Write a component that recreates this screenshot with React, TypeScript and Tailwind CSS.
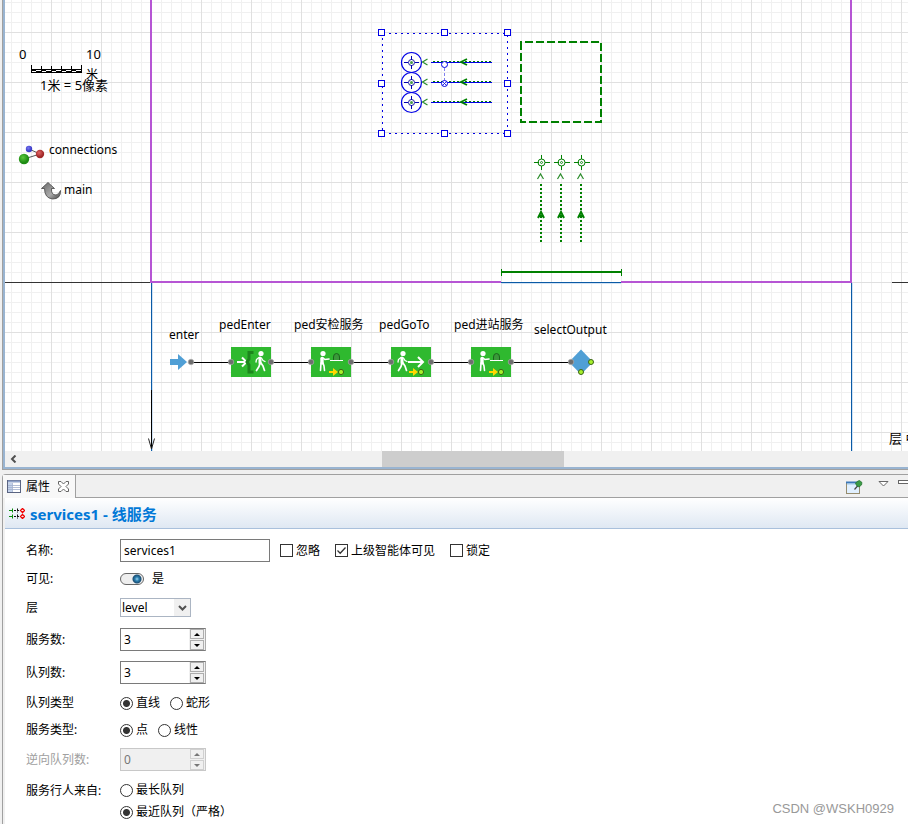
import { useState, type ReactNode } from "react";

const GREEN = "#008000";
const BLUE = "#0000e6";

function Walker({ x, y }: { x: number; y: number }) {
  return (
    <g transform={`translate(${x} ${y})`} stroke="#fff" fill="none" strokeLinecap="round" strokeLinejoin="round">
      <circle cx="6" cy="2.5" r="2.6" fill="#fff" stroke="none" />
      <path d="M5 7 L5 12" strokeWidth="3" />
      <path d="M4 6.5 L1.5 8.5 L1 11 M6.5 7 L8 9.5 L10 10.5" strokeWidth="1.300" />
      <path d="M5 12 L4 15.5 L1.5 19.5 M6 12 L8 15 L9.5 19.5" strokeWidth="1.700" />
    </g>
  );
}

function Server({ x, y }: { x: number; y: number }) {
  return (
    <g transform={`translate(${x} ${y})`}>
      <g stroke="#fff" fill="none" strokeLinecap="round">
        <circle cx="5" cy="2.5" r="2.6" fill="#fff" stroke="none" />
        <path d="M4 7.5 L4 12" strokeWidth="3.400" />
        <path d="M4.5 6.5 L7 8.5 L11 8" strokeWidth="1.600" />
        <path d="M3 12 L2.5 19.5 M5 12 L6 15 L6.5 19.5" strokeWidth="1.600" />
      </g>
      <path d="M15.500 9 V6 Q15.500 2.500 18.5 2.500 Q21.500 2.500 21.500 6 V9" fill="#3a9a3a" stroke="#1c641c" strokeWidth="1" />
      <path d="M12 9.500H25" stroke="#fff" />
    </g>
  );
}

function YellowExit({ x }: { x: number }) {
  return (
    <g>
      <path d={`M${x} 371 h4 v-3 l5 4 l-5 4 v-3 h-4z`} fill="#ffd800" />
      <circle cx={x + 12} cy="372" r="2.6" fill="#a6f02c" stroke="#3c6414" />
    </g>
  );
}

function Block({ x, kind }: { x: number; kind: "enter" | "service" | "goto" }) {
  return (
    <g>
      <rect x={x} y="347" width="40" height="30" fill="#2fb92f" />
      {kind === "enter" && (
        <>
          <path d="M237 362 H246 M242 357.5 L246.5 362 L242 366.5" stroke="#fff" strokeWidth="2" fill="none" />
          <path d="M253.500 352.500 H249 V359 L247 362 L249 365 V372 H253.500" stroke="#1d861d" strokeWidth="3" fill="none" />
          <Walker x={255} y={351} />
        </>
      )}
      {kind === "service" && (
        <>
          <Server x={x + 7} y={351} />
          <YellowExit x={x + 18} />
        </>
      )}
      {kind === "goto" && (
        <>
          <Walker x={x + 6} y={351} />
          <path d={`M${x + 17} 362 H${x + 31} M${x + 27} 357 L${x + 32} 362 L${x + 27} 367`} stroke="#fff" strokeWidth="2" fill="none" />
          <YellowExit x={x + 18} />
        </>
      )}
    </g>
  );
}

function Selection() {
  return (
    <g fill="none">
      <rect x="382.500" y="33.500" width="125" height="100" stroke={BLUE} strokeDasharray="2 4" shapeRendering="crispEdges" />
      {[62, 82, 102].map((y) => (
        <g key={y}>
          <circle cx="411.500" cy={y + 0.5} r="10" stroke={BLUE} strokeWidth="1.200" />
          <circle cx="411.500" cy={y + 0.5} r="3" stroke="#1a1aa0" fill="#fff" />
          <circle cx="411.500" cy={y + 0.5} r="1.500" fill="#4a9a4a" />
          <path d={`M411.500 ${y - 6}v4 M411.500 ${y + 3}v4 M404 ${y + 0.5}h4 M415 ${y + 0.5}h4`} stroke="#0000b0" />
          <path d={`M427.500 ${y - 3} L422.500 ${y} L427.500 ${y + 3}`} stroke="#2a8c2a" strokeWidth="1.200" />
          <path d={`M433 ${y - 0.5}H492`} stroke={GREEN} strokeDasharray="2 2" shapeRendering="crispEdges" />
          <path d={`M431 ${y + 0.5}H492`} stroke={BLUE} shapeRendering="crispEdges" />
          <path d={`M467 ${y - 3} L461 ${y} L467 ${y + 3}`} stroke={GREEN} strokeWidth="1.800" />
        </g>
      ))}
      <path d="M444.500 68V80" stroke="#8080ee" strokeDasharray="3 2" />
      <circle cx="444.500" cy="64.500" r="3" stroke={BLUE} fill="#fff" />
      <circle cx="444.500" cy="83.500" r="3" stroke={BLUE} fill="#fff" />
      <path d="M442.500 81.500l4 4m0-4l-4 4" stroke={BLUE} strokeWidth="0.800" />
      {[
        [378, 29], [441, 29], [504, 29], [378, 80], [504, 80], [378, 130], [441, 130], [504, 130],
      ].map(([x, y]) => (
        <rect key={`${x}-${y}`} x={x + 0.5} y={y + 0.5} width="6" height="6" fill="#fff" stroke={BLUE} shapeRendering="crispEdges" />
      ))}
    </g>
  );
}

function Canvas() {
  return (
    <svg className="block h-[451px] w-full bg-white" role="img" aria-label="main">
      <defs>
        <pattern id="minor" width="10" height="10" patternUnits="userSpaceOnUse" x="1" y="2">
          <path d="M0 0.500H10M0.500 0V10" stroke="#f0f0f0" shapeRendering="crispEdges" />
        </pattern>
        <pattern id="major" width="50" height="50" patternUnits="userSpaceOnUse" x="1" y="32">
          <path d="M0 0.500H50M0.500 0V50" stroke="#e0e0e0" shapeRendering="crispEdges" />
        </pattern>
        <radialGradient id="ballGreen" cx="0.4" cy="0.35"><stop stopColor="#5cc83c" /><stop offset="1" stopColor="#1e8c14" /></radialGradient>
        <radialGradient id="ballRed" cx="0.4" cy="0.35"><stop stopColor="#e06464" /><stop offset="1" stopColor="#a02828" /></radialGradient>
        <radialGradient id="ballBlue" cx="0.4" cy="0.35"><stop stopColor="#7878f0" /><stop offset="1" stopColor="#3c3cc8" /></radialGradient>
        <linearGradient id="back" x2="1" y2="1"><stop stopColor="#666" /><stop offset="0.6" stopColor="#aaa" /><stop offset="1" stopColor="#444" /></linearGradient>
      </defs>
      <g transform="translate(-5 0)">
        <rect x="5" width="100%" height="451" fill="url(#minor)" />
        <rect x="5" width="100%" height="451" fill="url(#major)" />

        {/* scale ruler */}
        <g shapeRendering="crispEdges">
          <rect x="31" y="69" width="51" height="4" fill="#000" />
          <path d="M32 71.500H36M42 71.500H46M52 71.500H56M62 71.500H66M72 71.500H76" stroke="#fff" />
          <path d="M36 70.500H41M46 70.500H51M56 70.500H61M66 70.500H71M76 70.500H81" stroke="#fff" />
          <path d="M31.500 65V73M41.500 66V73M51.500 66V73M61.500 66V73M71.500 66V73M81.500 65V73" stroke="#000" />
        </g>

        {/* connections and link to the parent agent */}
        <path d="M29 149L40 154L24 159" stroke="#555" fill="none" />
        <circle cx="29" cy="149" r="3.200" fill="url(#ballBlue)" />
        <circle cx="40" cy="154" r="4.200" fill="url(#ballRed)" />
        <circle cx="24" cy="159" r="5.200" fill="url(#ballGreen)" />
        <path d="M48 182.500L54.500 188.500H51.500Q51 195 56 195Q59 194.500 60.500 190.500Q61 199 52.500 199Q44.500 198 44.500 188.500H41.500Z" fill="url(#back)" stroke="#444" strokeWidth="0.800" />

        {/* axes, walls */}
        <g shapeRendering="crispEdges">
          <path d="M5 282.500H151M892 282.500H2000" stroke="#333" />
          <path d="M152.500 283V451M852.500 283V451M501 283.500H621" stroke="#d0e2f4" />
          <path d="M151.500 283V451M851.500 283V451M501 282.500H621" stroke="#0a5aa5" />
          <path d="M151.500 390V449" stroke="#000" />
          <path d="M151 0V282H501M621 282H851V0" stroke="#b655d4" strokeWidth="2" fill="none" />
          <path d="M501 272H622" stroke={GREEN} strokeWidth="2" />
          <path d="M501.500 269V276M621.500 269V276" stroke={GREEN} />
        </g>
        <path d="M148.500 438.500L151.500 449L154.500 438.500" stroke="#222" fill="none" />

        <Selection />
        <rect x="521" y="42" width="80" height="80" fill="none" stroke={GREEN} strokeWidth="2" strokeDasharray="8 3" strokeDashoffset="7" shapeRendering="crispEdges" />

        {[541, 561, 581].map((x) => (
          <g key={x} stroke={GREEN} fill="none">
            <circle cx={x + 0.5} cy="162.500" r="3.500" />
            <circle cx={x + 0.5} cy="162.500" r="1" strokeWidth="0.800" />
            <path d={`M${x + 0.5} 155v4M${x + 0.5} 166v4M${x - 7} 162.500h5M${x + 4} 162.500h5`} />
            <path d={`M${x - 3.5} 179L${x - 0.5} 174L${x + 2.5} 179`} stroke="#2a8c2a" strokeWidth="1.200" />
            <path d={`M${x} 184V242`} strokeWidth="2" strokeDasharray="2 2" shapeRendering="crispEdges" />
            <path d={`M${x - 3} 218L${x} 212L${x + 3} 218M${x - 2} 216H${x + 2}`} strokeWidth="2" />
          </g>
        ))}

        {/* pedestrian flowchart */}
        <path d="M191 362.500H571" stroke="#000" shapeRendering="crispEdges" />
        <path d="M170 359H178V354L187 362L178 370V365H170Z" fill="#509fd5" />
        <Block x={231} kind="enter" />
        <Block x={311} kind="service" />
        <Block x={391} kind="goto" />
        <Block x={471} kind="service" />
        <path d="M581 349.500L593 362L581 374.500L569 362Z" fill="#509fd5" />
        {[191, 231, 271, 311, 351, 391, 431, 471, 511, 571].map((x) => (
          <circle key={x} cx={x} cy="362" r="2.800" fill="#6e6e6e" stroke="#b4b4b4" strokeWidth="0.600" />
        ))}
        <circle cx="591" cy="362" r="2.500" fill="#a6f02c" stroke="#3c6414" />
        <circle cx="581" cy="372" r="2.500" fill="#a6f02c" stroke="#3c6414" />

        <g className="fill-black text-[13px]">
          <text x="19" y="59">0</text>
          <text x="86" y="59">10</text>
          <text x="40" y="90">1米 = 5像素</text>
          <text x="889" y="443">层 中</text>
        </g>
        <g className="fill-black text-[12px]">
          <text x="86" y="79">米</text>
          <text x="49" y="154">connections</text>
          <text x="64" y="194">main</text>
          <text x="169" y="339">enter</text>
          <text x="219" y="329">pedEnter</text>
          <text x="294" y="329">ped安检服务</text>
          <text x="379" y="329">pedGoTo</text>
          <text x="454" y="329">ped进站服务</text>
          <text x="534" y="334">selectOutput</text>
        </g>
      </g>
    </svg>
  );
}

function Row({ label, htmlFor, className, muted, children }: { label: string; htmlFor?: string; className: string; muted?: boolean; children: ReactNode }) {
  return (
    <div className={`grid grid-cols-[94px_1fr] items-center ${className}`}>
      <label htmlFor={htmlFor} className={muted ? "text-[#a0a0a0]" : ""}>{label}</label>
      <div className="flex items-center">{children}</div>
    </div>
  );
}

function Check({ label, initial = false }: { label: string; initial?: boolean }) {
  return (
    <label className="relative flex items-center gap-[3px]">
      <input type="checkbox" defaultChecked={initial} className="peer size-[13px] appearance-none border border-[#333] bg-white" />
      <svg className="pointer-events-none invisible absolute left-0 size-[13px] peer-checked:visible" viewBox="0 0 13 13" fill="none">
        <path d="M2.500 6.500L5.200 9.200L10.500 3.500" stroke="#333" strokeWidth="1.300" />
      </svg>
      {label}
    </label>
  );
}

function Radio({ name, label, initial = false }: { name: string; label: string; initial?: boolean }) {
  return (
    <label className="flex items-center gap-[3px]">
      <input
        type="radio"
        name={name}
        defaultChecked={initial}
        className="size-[13px] appearance-none rounded-full border border-[#333] bg-white checked:bg-[radial-gradient(circle,#333_3px,transparent_4px)]"
      />
      {label}
    </label>
  );
}

function Spinner({ id, initial, disabled = false }: { id: string; initial: number; disabled?: boolean }) {
  const [value, setValue] = useState(initial);
  const arrow = "flex h-[10px] w-[14px] items-center justify-center border border-[#adadad] bg-[#f0f0f0] disabled:border-[#d0d0d0]";
  const fill = disabled ? "#777" : "#000";
  return (
    <div className={`flex h-[23px] w-[86px] border ${disabled ? "border-[#c8c8c8] bg-[#f0f0f0]" : "border-[#7a7a7a] border-r-[#adadad] bg-white"}`}>
      <input
        id={id}
        value={value}
        disabled={disabled}
        onChange={(e) => setValue(Number(e.target.value) || 0)}
        className="w-0 flex-1 bg-transparent px-[3px] outline-none disabled:text-[#777]"
      />
      <div className="flex w-4 flex-col items-center justify-between bg-[#f0f0f0]">
        <button type="button" aria-label="+" disabled={disabled} className={arrow} onClick={() => setValue(value + 1)}>
          <svg width="6" height="3" viewBox="0 0 6 3"><path d="M0 3L3 0L6 3Z" fill={fill} /></svg>
        </button>
        <button type="button" aria-label="-" disabled={disabled} className={arrow} onClick={() => setValue(value - 1)}>
          <svg width="6" height="3" viewBox="0 0 6 3"><path d="M0 0L3 3L6 0Z" fill={fill} /></svg>
        </button>
      </div>
    </div>
  );
}

export default function App() {
  return (
    <div className="relative flex min-h-screen flex-col overflow-hidden bg-[#f0f0f0] pl-[2px] font-['Noto_Sans','Noto_Sans_CJK_SC',sans-serif] text-[12px] leading-4 text-black">
      <section className="border-b border-l border-[#a0a0a0]">
        <div className="border-b-2 border-l-2 border-[#99b4d1]">
          <Canvas />
          <div className="flex h-4 items-center bg-[#f0f0f0]">
            <button type="button" aria-label="←" className="flex w-4 shrink-0 justify-center">
              <svg width="7" height="8" viewBox="0 0 7 8"><path d="M5.500 0.500L2 4L5.500 7.500" stroke="#505050" strokeWidth="2" fill="none" /></svg>
            </button>
            <div className="h-full flex-1 pl-[40%]">
              <div className="h-full w-[182px] bg-[#cdcdcd]" />
            </div>
          </div>
        </div>
      </section>

      <section className="mt-1 flex flex-1 flex-col rounded-tl border-l border-t border-[#a0a0a0]">
        <div className="flex h-[23px]">
          <div className="flex w-[73px] items-center gap-[5px] border-r border-[#a0a0a0] bg-[#f8f8f8] pl-1">
            <svg width="14" height="13" viewBox="0 0 14 13" className="shrink-0">
              <rect x="0.500" y="0.500" width="13" height="12" fill="#fff" stroke="#5a6482" />
              <path d="M1 1.500H13" stroke="#8ca0c8" strokeWidth="2" />
              <path d="M1 3H5V12H1Z" fill="#c3d2eb" />
              <path d="M1 5.500H13M1 7.500H13M1 9.500H13M5.500 3V12" stroke="#a0afcd" strokeWidth="0.800" />
            </svg>
            <span className="shrink-0">属性</span>
            <button type="button" aria-label="×" className="ml-[3px] shrink-0">
              <svg width="11" height="11" viewBox="0 0 11 11" fill="#fff" stroke="#666">
                <path d="M0.500 0.500H3L5.500 3L8 0.500H10.500V3L8 5.500L10.500 8V10.500H8L5.500 8L3 10.500H0.500V8L3 5.500L0.500 3Z" />
              </svg>
            </button>
          </div>
          <div className="flex flex-1 items-start justify-end overflow-hidden border-b border-[#a0a0a0]">
            <button type="button" aria-label="新建视图" className="mt-[5px]">
              <svg width="17" height="15" viewBox="0 0 17 15">
                <rect x="0.500" y="2.500" width="13" height="11" fill="#e1f0ff" stroke="#968c6e" />
                <path d="M0 2.500H14" stroke="#3c78b9" strokeWidth="2" />
                <path d="M1 4H13" stroke="#a0c8e6" />
                <path d="M8.500 9.500L12 5.500" stroke="#444" strokeWidth="1.200" />
                <path d="M9.500 3L12 1L13.500 0.500L16 2.500L15.500 5L13 7L10.500 5.500Z" fill="#3c9b46" stroke="#1e6e28" strokeWidth="0.700" />
              </svg>
            </button>
            <button type="button" aria-label="视图菜单" className="ml-[15px] mt-[6px]">
              <svg width="11" height="6" viewBox="0 0 11 6"><path d="M1 0.500H10L5.500 5Z" fill="#fff" stroke="#666" /></svg>
            </button>
            <button type="button" aria-label="最小化" className="-mr-[1px] ml-[9px] mt-[5px]">
              <svg width="11" height="4" viewBox="0 0 11 4"><rect x="0.500" y="0.500" width="10" height="3" fill="#fff" stroke="#666" /></svg>
            </button>
          </div>
        </div>

        <div className="flex-1 border-l-2 border-[#f0f0f0] bg-white">
          <header className="flex h-[31px] items-center gap-[5px] border-b border-[#a9c0dc] bg-gradient-to-b from-white to-[#dfe8f3] pl-1 pt-px">
            <svg width="16" height="11" viewBox="0 0 16 11" fill="none">
              <path d="M0 2.500H4M3.500 0.500V4.500M0 8.500H4M3.500 6.500V10.500" stroke="#0a8c0a" />
              <path d="M5 2.500H10M5 8.500H10M8.500 0.500V4.500M8.500 6.500V10.500" stroke="#111" strokeDasharray="2 1" />
              <path d="M13.500 0.500L15.500 2.500L13.500 4.500L11.500 2.500ZM13.500 6.500L15.500 8.500L13.500 10.500L11.500 8.500Z" stroke="#f00000" strokeWidth="1.300" />
            </svg>
            <h1 className="text-[15px] font-bold leading-5 text-[#0078d7]">services1 - 线服务</h1>
          </header>

          <form className="px-[21px] pt-[10px]">
            <Row label="名称:" htmlFor="name" className="h-[23px]">
              <input id="name" defaultValue="services1" className="h-[23px] w-[150px] border border-[#7a7a7a] bg-white px-[3px] outline-none" />
              <div className="ml-[10px] flex gap-[15px]">
                <Check label="忽略" />
                <Check label="上级智能体可见" initial />
                <Check label="锁定" />
              </div>
            </Row>
            <Row label="可见:" htmlFor="visible" className="mt-[7px] h-5">
              <label className="flex items-center gap-2">
                <input
                  id="visible"
                  type="checkbox"
                  role="switch"
                  defaultChecked
                  className="h-3 w-6 appearance-none rounded-full border border-[#666] bg-[#eee] bg-[radial-gradient(circle_at_30%_50%,#888_4px,transparent_5px)] checked:bg-[radial-gradient(circle_at_16px_5px,#9cd4f0_0px,#2a7fb0_2px,#1c4f74_4px,transparent_5px)]"
                />
                是
              </label>
            </Row>
            <Row label="层" htmlFor="level" className="mt-[9px] h-[19px]">
              <div className="relative flex">
                <select id="level" className="h-[19px] w-[71px] appearance-none border border-[#abb5c3] bg-white pl-px leading-4 outline-none">
                  <option>level</option>
                </select>
                <span className="pointer-events-none absolute bottom-px right-px top-px flex w-4 items-center justify-center bg-[#f0f0f0]">
                  <svg width="9" height="6" viewBox="0 0 9 6"><path d="M1 1L4.500 4.500L8 1" stroke="#505050" strokeWidth="2" fill="none" /></svg>
                </span>
              </div>
            </Row>
            <Row label="服务数:" htmlFor="services" className="mt-[11px] h-[23px]">
              <Spinner id="services" initial={3} />
            </Row>
            <Row label="队列数:" htmlFor="queues" className="mt-[10px] h-[23px]">
              <Spinner id="queues" initial={3} />
            </Row>
            <Row label="队列类型" className="mt-[9px] h-5">
              <div className="flex gap-[10px]">
                <Radio name="queueType" label="直线" initial />
                <Radio name="queueType" label="蛇形" />
              </div>
            </Row>
            <Row label="服务类型:" className="mt-[7px] h-5">
              <div className="flex gap-[10px]">
                <Radio name="serviceType" label="点" initial />
                <Radio name="serviceType" label="线性" />
              </div>
            </Row>
            <Row label="逆向队列数:" htmlFor="reverse" muted className="mt-2 h-[23px]">
              <Spinner id="reverse" initial={0} disabled />
            </Row>
            <div className="mt-2 grid grid-cols-[94px_1fr]">
              <span className="leading-6">服务行人来自:</span>
              <div>
                <div className="flex h-[22px] items-center"><Radio name="source" label="最长队列" /></div>
                <div className="flex h-[22px] items-center"><Radio name="source" label="最近队列（严格）" initial /></div>
              </div>
            </div>
          </form>
        </div>
      </section>

      <div className="absolute bottom-[7px] right-[14px] font-['Liberation_Sans',sans-serif] text-[13px] text-[#999]">CSDN @WSKH0929</div>
    </div>
  );
}
